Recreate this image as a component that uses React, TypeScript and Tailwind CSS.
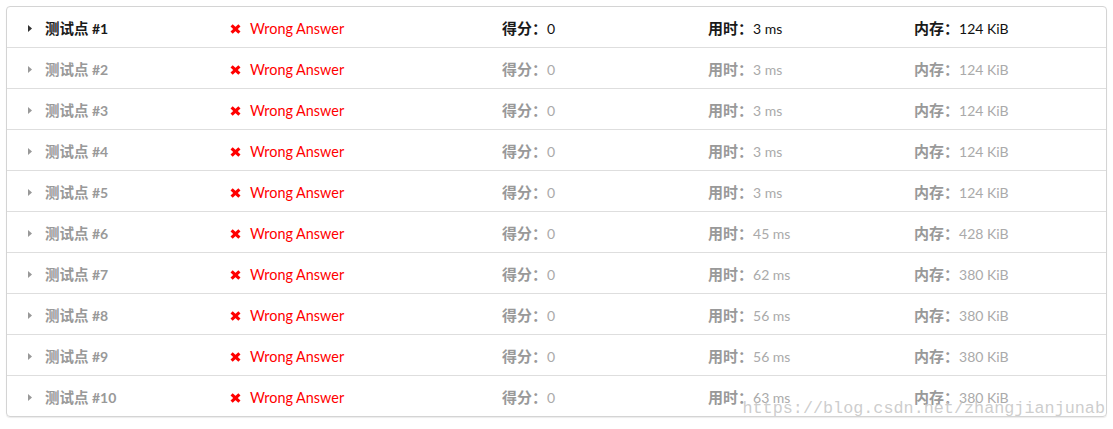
const ROWS = [
  { id: 1, time: "3 ms", mem: "124 KiB" },
  { id: 2, time: "3 ms", mem: "124 KiB" },
  { id: 3, time: "3 ms", mem: "124 KiB" },
  { id: 4, time: "3 ms", mem: "124 KiB" },
  { id: 5, time: "3 ms", mem: "124 KiB" },
  { id: 6, time: "45 ms", mem: "428 KiB" },
  { id: 7, time: "62 ms", mem: "380 KiB" },
  { id: 8, time: "56 ms", mem: "380 KiB" },
  { id: 9, time: "56 ms", mem: "380 KiB" },
  { id: 10, time: "63 ms", mem: "380 KiB" },
];

function Caret({ active }: { active: boolean }) {
  return (
    <svg viewBox="0 0 4 7" className="w-[4px] h-[7px]">
      <path d="M0 0 L4 3.5 L0 7 Z" fill={active ? "#333" : "#999"} />
    </svg>
  );
}

// thick red cross, like the old glyphicon "remove"
function Cross() {
  return (
    <svg viewBox="0 0 11 10" className="w-[11px] h-[10px] mr-[9px]">
      <path d="M1.6 1.4 L9.4 8.6 M9.4 1.4 L1.6 8.6" stroke="#ff0000" strokeWidth="3.2" strokeLinecap="butt" />
    </svg>
  );
}

export default function App() {
  return (
    <div className="w-[1113px] h-[429px] bg-white pt-[6px] pl-[6px] font-['Lato','Noto_Sans_CJK_SC',sans-serif] text-[14px] leading-[20px]">
      <div className="relative w-[1101px] rounded-[4px] border border-[#d4d4d4] shadow-[0_1px_1px_rgba(0,0,0,0.08)]">
        {ROWS.map((r, i) => {
          const active = i === 0;
          const label = active ? "text-[#1a1a1a]" : "text-[#999]";
          const value = active ? "text-[#111]" : "text-[#aaa]";
          return (
            <div
              key={r.id}
              className={
                i > 0
                  ? "flex items-center h-[41px] pt-[3px] border-t border-[#dedede]"
                  : "flex items-center h-[40px] pt-[3px]"
              }
            >
              <div className="w-[38px] pl-[21px] flex items-center">
                <Caret active={active} />
              </div>
              <div className={`w-[185px] font-bold ${label}`}>
                <span className="text-[14.5px]">测试点</span> #{r.id}
              </div>
              <div className="w-[272px] flex items-center text-[#ff0000] text-[14.4px]">
                <Cross />
                Wrong Answer
              </div>
              <div className="w-[206px]">
                <span className={`font-bold text-[15px] ${label}`}>得分：</span>
                <span className={value}>0</span>
              </div>
              <div className="w-[206px]">
                <span className={`font-bold text-[15px] ${label}`}>用时：</span>
                <span className={value}>{r.time}</span>
              </div>
              <div className="flex-1">
                <span className={`font-bold text-[15px] ${label}`}>内存：</span>
                <span className={value}>{r.mem}</span>
              </div>
            </div>
          );
        })}
        <div className="absolute right-[1px] bottom-[-2px] font-['Liberation_Mono',monospace] text-[16.8px] leading-none text-[#c4c4c4]/85 pointer-events-none">
          https://blog.csdn.net/zhangjianjunab
        </div>
      </div>
    </div>
  );
}
